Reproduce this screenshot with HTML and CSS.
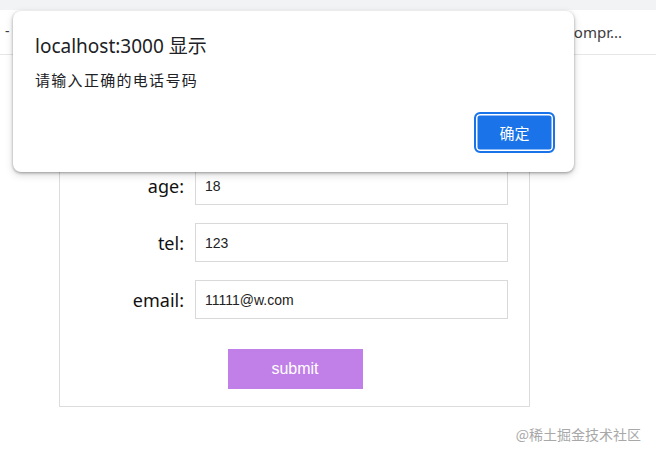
FILE: index.html
```html
<!DOCTYPE html>
<html lang="zh-CN">
<head>
<meta charset="utf-8">
<title>form</title>
<link rel="stylesheet" href="styles.css">
</head>
<body>
<div class="topstrip"></div>
<div class="bookbar">
  <span class="dash">-</span>
  <span class="bm">Compr...</span>
</div>
<main class="page">
  <form class="form-box">
    <div class="row"><label class="lbl">name:</label><input class="inp" value="tom"></div>
    <div class="row"><label class="lbl">age:</label><input class="inp" value="18"></div>
    <div class="row"><label class="lbl">tel:</label><input class="inp" value="123"></div>
    <div class="row"><label class="lbl">email:</label><input class="inp" value="11111@w.com"></div>
    <div class="actions"><button type="button" class="submit">submit</button></div>
  </form>
</main>
<div class="dialog">
  <div class="d-title">localhost:3000 显示</div>
  <div class="d-msg">请输入正确的电话号码</div>
  <div class="d-actions"><button type="button" class="d-ok">确定</button></div>
</div>
<div class="watermark">@稀土掘金技术社区</div>
</body>
</html>
```
FILE: styles.css
```css
html, body {
  margin: 0;
  padding: 0;
  background: #fff;
  font-family: "Noto Sans", "Noto Sans CJK SC", sans-serif;
  width: 656px;
  height: 456px;
  overflow: hidden;
}
.topstrip {
  height: 10px;
  background: #f1f3f4;
}
.bookbar {
  border-bottom: 1px solid #e6e6e6;
  display: flex;
  align-items: center;
  justify-content: space-between;
  box-sizing: border-box;
  height: 45px;
  padding: 0 34px 0 5px;
  font-size: 14px;
  color: #3c3c3c;
}
.dash { margin-top: -4px; }
.bm { font-size: 15px; }
.page {
  padding-top: 19px;
}
.form-box {
  margin: 0 0 0 59px;
  width: 471px;
  box-sizing: border-box;
  border: 1px solid #dcdcdc;
  padding: 34px 0 17px;
  display: flex;
  flex-direction: column;
  gap: 18px;
}
.row {
  display: flex;
  align-items: center;
  gap: 11px;
}
.lbl {
  width: 124px;
  text-align: right;
  font-size: 18px;
  color: #111;
}
.inp {
  width: 313px;
  height: 39px;
  box-sizing: border-box;
  border: 1px solid #d9d9d9;
  padding: 0 0 0 9px;
  font-family: "Liberation Sans", Arial, sans-serif;
  font-size: 14px;
  color: #222;
  margin: 0;
  outline: none;
}
.actions {
  display: flex;
  justify-content: center;
  margin-top: 12px;
}
.submit {
  width: 135px;
  height: 40px;
  border: none;
  background: #c17fe8;
  color: #fff;
  font-family: "Liberation Sans", Arial, sans-serif;
  font-size: 16px;
  margin-left: 1px;
}
.dialog {
  position: absolute;
  left: 13px;
  top: 11px;
  width: 561px;
  height: 161px;
  box-sizing: border-box;
  background: #fff;
  border-radius: 8px;
  box-shadow: 0 1px 3px rgba(0,0,0,0.35), 0 3px 8px rgba(0,0,0,0.15);
  padding: 22px 19px 19px 22px;
  display: flex;
  flex-direction: column;
}
.d-title {
  font-size: 19px;
  line-height: 26px;
  color: #202124;
}
.d-msg {
  margin-top: 11px;
  font-size: 15px;
  letter-spacing: 1.3px;
  line-height: 20px;
  color: #202124;
}
.d-actions {
  margin-top: auto;
  display: flex;
  justify-content: flex-end;
}
.d-ok {
  width: 81px;
  height: 41px;
  box-sizing: border-box;
  border: 2px solid #1a73e8;
  border-radius: 6px;
  box-shadow: inset 0 0 0 1.5px #fff;
  background: #1a73e8;
  color: #fff;
  font-family: "Noto Sans CJK SC", sans-serif;
  font-size: 15px;
  padding: 0;
}
.watermark {
  position: absolute;
  right: 15px;
  bottom: 12px;
  font-size: 14px;
  color: #a8a8a8;
  font-family: "Noto Sans CJK SC", sans-serif;
}
```
